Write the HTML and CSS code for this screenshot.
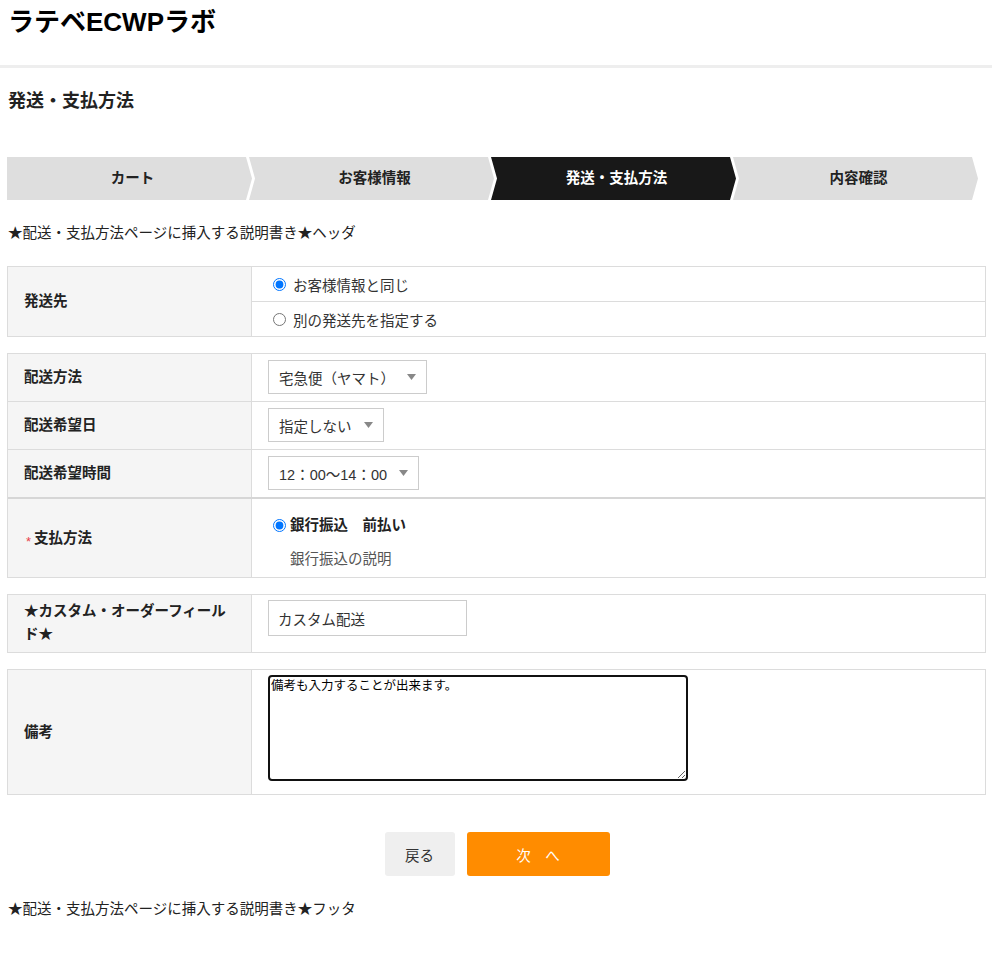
FILE: index.html
```html
<!DOCTYPE html>
<html lang="ja">
<head>
<meta charset="utf-8">
<title>発送・支払方法</title>
<link rel="stylesheet" href="styles.css">
</head>
<body>
<header class="site-header">
  <div class="site-title">ラテベECWPラボ</div>
</header>
<main class="page">
  <h1 class="page-title">発送・支払方法</h1>
  <ol class="steps">
    <li class="step step-first">カート</li>
    <li class="step">お客様情報</li>
    <li class="step step-active">発送・支払方法</li>
    <li class="step">内容確認</li>
  </ol>
  <p class="note">★配送・支払方法ページに挿入する説明書き★ヘッダ</p>

  <div class="box">
    <div class="row">
      <div class="label">発送先</div>
      <div class="value options">
        <label class="opt"><input type="radio" name="ship" checked><span>お客様情報と同じ</span></label>
        <label class="opt opt-sep"><input type="radio" name="ship"><span>別の発送先を指定する</span></label>
      </div>
    </div>
  </div>

  <div class="box">
    <div class="row">
      <div class="label">配送方法</div>
      <div class="value select-cell">
        <div class="select"><span>宅急便（ヤマト）</span><svg class="caret" width="9" height="6" viewBox="0 0 9 6"><path d="M0 0H9L4.5 6Z" fill="#888"/></svg></div>
      </div>
    </div>
    <div class="row row-sep">
      <div class="label">配送希望日</div>
      <div class="value select-cell">
        <div class="select"><span>指定しない</span><svg class="caret" width="9" height="6" viewBox="0 0 9 6"><path d="M0 0H9L4.5 6Z" fill="#888"/></svg></div>
      </div>
    </div>
    <div class="row row-sep">
      <div class="label">配送希望時間</div>
      <div class="value select-cell">
        <div class="select"><span>12：00〜14：00</span><svg class="caret" width="9" height="6" viewBox="0 0 9 6"><path d="M0 0H9L4.5 6Z" fill="#888"/></svg></div>
      </div>
    </div>
    <div class="row row-sep-thick">
      <div class="label"><span class="req">*</span>支払方法</div>
      <div class="value pay-cell">
        <label class="pay-opt"><input type="radio" name="pay" checked><span>銀行振込　前払い</span></label>
        <p class="pay-desc">銀行振込の説明</p>
      </div>
    </div>
  </div>

  <div class="box">
    <div class="row">
      <div class="label label-top">★カスタム・オーダーフィールド★</div>
      <div class="value input-cell">
        <input class="text-input" type="text" value="カスタム配送">
      </div>
    </div>
  </div>

  <div class="box">
    <div class="row">
      <div class="label">備考</div>
      <div class="value memo-cell">
        <textarea class="memo">備考も入力することが出来ます。</textarea>
      </div>
    </div>
  </div>

  <div class="actions">
    <button class="btn btn-back" type="button">戻る</button>
    <button class="btn btn-next" type="button">次　へ</button>
  </div>

  <p class="note note-footer">★配送・支払方法ページに挿入する説明書き★フッタ</p>
</main>
</body>
</html>
```

FILE: styles.css
```css
body {
  margin: 0;
  font-family: "Liberation Sans", "Noto Sans CJK JP", sans-serif;
  font-size: 14.5px;
  color: #222;
  background: #fff;
}

.site-header {
  height: 65px;
  border-bottom: 3px solid #eeeeee;
  padding-left: 8px;
}

.site-title {
  font-size: 26px;
  font-weight: bold;
  line-height: 44px;
  color: #000;
}

.page {
  padding: 0 6px 0 7px;
}

.page-title {
  margin: 20px 0 0 1px;
  font-size: 18px;
  line-height: 26px;
  font-weight: bold;
  color: #222;
}

.steps {
  margin: 43px 8px 0 0;
  padding: 0;
  list-style: none;
  display: flex;
  height: 43px;
}

.step {
  flex: 1;
  margin-left: -3px;
  padding-left: 6px;
  background: #dedede;
  color: #222;
  font-weight: bold;
  line-height: 43px;
  text-align: center;
  clip-path: polygon(0 0, calc(100% - 6px) 0, 100% 50%, calc(100% - 6px) 100%, 0 100%, 6px 50%);
}

.step-first {
  margin-left: 0;
  clip-path: polygon(0 0, calc(100% - 6px) 0, 100% 50%, calc(100% - 6px) 100%, 0 100%);
}

.step-active {
  background: #181818;
  color: #fff;
}

.note {
  margin: 23px 0 0 1px;
  line-height: 20px;
  color: #222;
}

.box {
  margin-top: 16px;
  border: 1px solid #dcdcdc;
}

.note + .box {
  margin-top: 23px;
}

.row {
  display: grid;
  grid-template-columns: 244px 1fr;
}

.row-sep {
  border-top: 1px solid #dcdcdc;
}

.row-sep-thick {
  border-top: 2px solid #d6d6d6;
}

.label {
  background: #f5f5f5;
  border-right: 1px solid #dcdcdc;
  padding: 0 16px;
  display: flex;
  align-items: center;
  font-weight: bold;
  line-height: 23px;
}

.label-top {
  padding: 5px 20px 6px 16px;
}

.req {
  color: #e8414b;
  font-size: 13px;
  line-height: 13px;
  font-weight: normal;
  margin: 7px 3px 0 2px;
}

.value {
  padding: 0 16px;
}

.options {
  padding: 0;
}

.opt {
  display: flex;
  align-items: center;
  height: 34px;
  padding-left: 16px;
  color: #333;
}

.opt-sep {
  border-top: 1px solid #dcdcdc;
}

.opt input,
.pay-opt input {
  width: 13px;
  height: 13px;
  margin: 0 7px 0 5px;
}

.select-cell {
  padding-top: 6px;
  padding-bottom: 7px;
}

.select {
  display: inline-flex;
  align-items: center;
  gap: 12px;
  height: 34px;
  box-sizing: border-box;
  padding: 0 10px;
  border: 1px solid #cccccc;
  background: #fff;
  color: #333;
}

.caret {
  display: block;
}

.pay-cell {
  padding-top: 15px;
  padding-bottom: 7px;
}

.pay-opt {
  display: flex;
  align-items: center;
  line-height: 22px;
  font-weight: bold;
  color: #222;
}

.pay-opt input {
  margin-right: 4px;
}

.pay-desc {
  margin: 12px 0 0 22px;
  line-height: 22px;
  color: #555;
}

.input-cell {
  padding-top: 5px;
}

.text-input {
  width: 199px;
  height: 36px;
  box-sizing: border-box;
  border: 1px solid #cccccc;
  padding: 0 9px;
  font: inherit;
  color: #333;
  outline: none;
}

.memo-cell {
  padding-top: 5px;
  padding-bottom: 13px;
}

.memo {
  display: block;
  width: 420px;
  height: 106px;
  box-sizing: border-box;
  border: 2px solid #111;
  border-radius: 4px;
  padding: 1px 1px;
  font-family: "Liberation Sans", "Noto Sans CJK JP", sans-serif;
  font-size: 12.5px;
  line-height: 16px;
  color: #000;
  resize: both;
}

.actions {
  display: flex;
  justify-content: center;
  gap: 12px;
  margin-top: 37px;
  padding-left: 1px;
}

.btn {
  height: 44px;
  border: none;
  border-radius: 3px;
  font-family: "Liberation Sans", "Noto Sans CJK JP", sans-serif;
  font-size: 14.5px;
  cursor: pointer;
}

.btn-back {
  width: 70px;
  background: #efefef;
  color: #333;
}

.btn-next {
  width: 143px;
  background: #ff8c00;
  color: #fff;
}

.note-footer {
  margin-top: 23px;
}
```
